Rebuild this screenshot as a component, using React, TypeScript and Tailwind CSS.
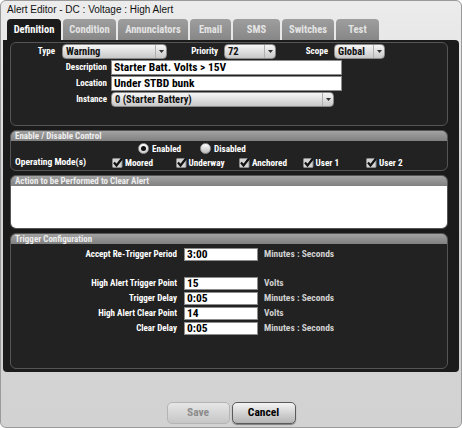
import React from 'react';

const narrow = "font-['Roboto',sans-serif] font-bold [font-stretch:80%]";

const tabs = [
  { label: 'Definition', w: 'w-[54px]' },
  { label: 'Condition', w: 'w-[53px]' },
  { label: 'Annunciators', w: 'w-[70px]' },
  { label: 'Email', w: 'w-[41px]' },
  { label: 'SMS', w: 'w-[47px]' },
  { label: 'Switches', w: 'w-[52px]' },
  { label: 'Test', w: 'w-[43px]' },
];

const modes = ['Moored', 'Underway', 'Anchored', 'User 1', 'User 2'];

const triggers = [
  { label: 'High Alert Trigger Point', value: '15', unit: 'Volts' },
  { label: 'Trigger Delay', value: '0:05', unit: 'Minutes : Seconds' },
  { label: 'High Alert Clear Point', value: '14', unit: 'Volts' },
  { label: 'Clear Delay', value: '0:05', unit: 'Minutes : Seconds' },
];

function Select({ value, className }: { value: string; className: string }) {
  return (
    <div
      className={`flex h-[15px] items-stretch rounded-[4px] border border-[#8a8a8a] bg-linear-to-b from-[#f6f6f6] to-[#c8c8c8] text-[10.5px] leading-[13px] text-[#111] ${className}`}
    >
      <span className="flex-1 truncate pl-[3px]">{value}</span>
      <span className="flex w-[11px] items-center justify-center border-l border-[#b0b0b0]">
        <svg width="5" height="3" viewBox="0 0 5 3">
          <path d="M0 0 L5 0 L2.5 3 Z" fill="#333" />
        </svg>
      </span>
    </div>
  );
}

function TextBox({ value, className }: { value: string; className: string }) {
  return (
    <div className={`flex items-center border border-[#8c8c8c] bg-white pl-[2px] text-[11.5px] text-black ${className}`}>
      {value}
    </div>
  );
}

function Section({ title, className, children }: { title?: string; className: string; children?: React.ReactNode }) {
  return (
    <div className={`flex flex-col overflow-hidden rounded-[6px] border border-[#555] bg-[#222] ${className}`}>
      {title && (
        <div className="h-[10px] shrink-0 bg-linear-to-b from-[#a3a3a3] to-[#808080] pl-[4px] text-[9px] leading-[10px] text-[#eeeeee]">
          {title}
        </div>
      )}
      {children}
    </div>
  );
}

function Check() {
  return (
    <svg width="11" height="11" viewBox="0 0 11 11" className="shrink-0">
      <rect x="0.5" y="1.5" width="9.5" height="9" rx="1" fill="#d4d4d4" stroke="#8a8a8a" />
      <path d="M2 5.5 L4.5 8.5 L10 1.5" stroke="#111" strokeWidth="2.2" fill="none" />
    </svg>
  );
}

function Radio({ on }: { on: boolean }) {
  return on ? (
    <span className="flex h-[11px] w-[11px] shrink-0 items-center justify-center rounded-full border border-[#999] bg-linear-to-b from-white to-[#d0d0d0]">
      <span className="h-[5px] w-[5px] rounded-full bg-[#111]" />
    </span>
  ) : (
    <span className="h-[11px] w-[11px] shrink-0 rounded-full border border-[#999] bg-linear-to-b from-white to-[#bcbcbc]" />
  );
}

export default function App() {
  return (
    <div className="h-[428px] w-[462px] bg-white">
      <div className={`flex h-[428px] w-[462px] flex-col overflow-hidden rounded-[6px] border border-[#9a9a9a] bg-linear-to-b from-[#ececec] via-[#d4d4d4] to-[#d2d2d2] ${narrow}`}>
        <div className="h-[18px] pl-[6px] pt-[3px] font-['Liberation_Sans',sans-serif] text-[10px] font-normal leading-[12px] text-[#111] [font-stretch:100%]">
          Alert Editor - DC : Voltage : High Alert
        </div>

        <div className="flex h-[21px] gap-[2px] pl-[6px]">
          {tabs.map((t, i) => (
            <div
              key={t.label}
              className={`flex items-center justify-center rounded-t-[4px] text-[10.5px] ${t.w} ${
                i === 0 ? 'bg-[#1b1b1b] text-white' : 'bg-linear-to-b from-[#9e9e9e] to-[#878787] text-[#e4e4e4]'
              }`}
            >
              {t.label}
            </div>
          ))}
        </div>

        <div className="ml-[2px] flex h-[332px] w-[456px] flex-col gap-[4px] rounded-[4px] rounded-tl-none bg-[#1b1b1b] pb-[3px] pl-[7px] pr-[11px] pt-[2px]">
          <Section className="h-[84px]">
            <div className="flex flex-col gap-[1px] pt-[1px] text-[9px] text-white">
              <div className="flex h-[15px] items-center">
                <span className="w-[44px] text-right">Type</span>
                <Select value="Warning" className="ml-[7px] w-[105px]" />
                <span className="w-[51px] text-right">Priority</span>
                <Select value="72" className="ml-[6px] w-[52px]" />
                <span className="w-[52px] text-right">Scope</span>
                <Select value="Global" className="ml-[6px] w-[51px]" />
              </div>
              <div className="flex h-[15px] items-center">
                <span className="w-[96px] text-right">Description</span>
                <TextBox value="Starter Batt. Volts > 15V" className="ml-[4px] h-[15px] w-[231px]" />
              </div>
              <div className="flex h-[15px] items-center">
                <span className="w-[96px] text-right">Location</span>
                <TextBox value="Under STBD bunk" className="ml-[4px] h-[15px] w-[231px]" />
              </div>
              <div className="flex h-[15px] items-center">
                <span className="w-[96px] text-right">Instance</span>
                <Select value="0 (Starter Battery)" className="ml-[4px] w-[223px]" />
              </div>
            </div>
          </Section>

          <Section title="Enable / Disable Control" className="h-[41px]">
            <div className="flex flex-col gap-[3px] pt-[2px] text-[9.2px] text-white">
              <div className="flex h-[11px] items-center pl-[127px]">
                <span className="flex w-[62px] items-center gap-[3px]">
                  <Radio on />
                  Enabled
                </span>
                <span className="flex items-center gap-[3px]">
                  <Radio on={false} />
                  Disabled
                </span>
              </div>
              <div className="flex h-[11px] items-center pl-[4px]">
                <span className="w-[97px] text-[9.5px]">Operating Mode(s)</span>
                {modes.map((m) => (
                  <span key={m} className="flex w-[63.5px] items-center gap-[2px]">
                    <Check />
                    {m}
                  </span>
                ))}
              </div>
            </div>
          </Section>

          <Section title="Action to be Performed to Clear Alert" className="h-[54px]">
            <div className="flex-1 bg-white" />
          </Section>

          <Section title="Trigger Configuration" className="h-[136px]">
            <div className="flex flex-col pt-[4px] text-[9px] text-white">
              <div className="flex h-[13px] items-center">
                <span className="w-[166px] text-right">Accept Re-Trigger Period</span>
                <TextBox value="3:00" className="ml-[7px] h-[13px] w-[74px]" />
                <span className="ml-[6px] text-[9.5px] text-[#d0d0d0]">Minutes : Seconds</span>
              </div>
              <div className="mt-[16px] flex flex-col gap-[2px]">
                {triggers.map((t) => (
                  <div key={t.label} className="flex h-[13px] items-center">
                    <span className="w-[166px] text-right">{t.label}</span>
                    <TextBox value={t.value} className="ml-[7px] h-[13px] w-[74px]" />
                    <span className="ml-[6px] text-[9.5px] text-[#d0d0d0]">{t.unit}</span>
                  </div>
                ))}
              </div>
            </div>
          </Section>
        </div>

        <div className="flex flex-1 items-end justify-center gap-[2px] pb-[3px]">
          <button className="h-[22px] w-[63px] rounded-[5px] border border-[#b4b4b4] bg-linear-to-b from-[#e6e6e6] to-[#c6c6c6] text-[11.5px] text-[#8c8c8c]">
            Save
          </button>
          <button className="h-[22px] w-[64px] rounded-[5px] border border-[#5a5a5a] bg-linear-to-b from-[#f4f4f4] to-[#b4b4b4] text-[11.5px] text-black shadow-[0_1px_1px_rgba(0,0,0,0.4)]">
            Cancel
          </button>
        </div>
      </div>
    </div>
  );
}
